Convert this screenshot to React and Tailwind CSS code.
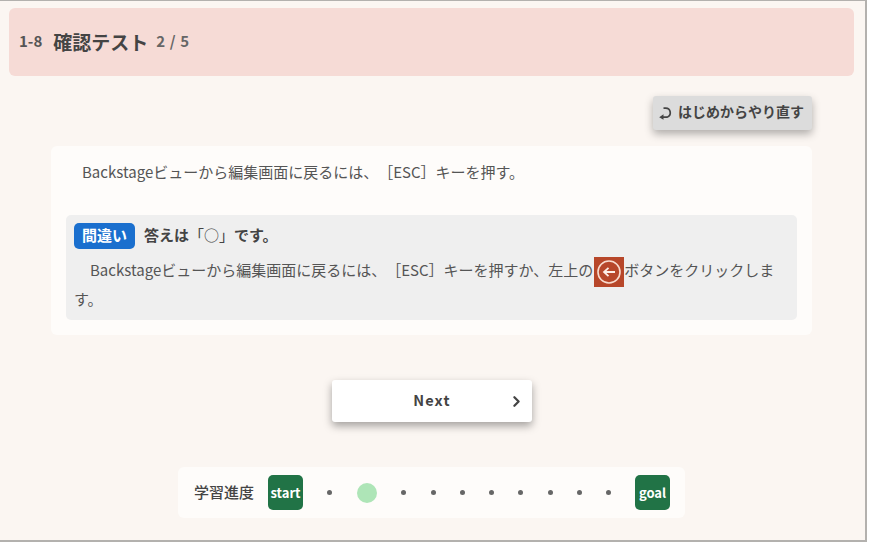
import { ChevronRight } from 'lucide-react';

const FONT = "font-['Noto_Sans_CJK_JP','Noto_Sans',sans-serif] [text-spacing-trim:space-all]";

function ProgressDot() {
  return <span className="w-[5px] h-[5px] rounded-full bg-[#666]" />;
}

function GreenBadge({ children }) {
  return (
    <span className="w-[35px] h-[35px] rounded-[5px] bg-[#217346] text-white text-[13px] font-bold flex items-center justify-center">
      {children}
    </span>
  );
}

function BackIcon() {
  return (
    <svg width="30" height="30" viewBox="0 0 30 30" className="inline-block align-top relative top-[2px] ml-[1px] -mb-[1px]">
      <rect width="30" height="30" fill="#b7472a" />
      <circle cx="15" cy="15" r="11" fill="none" stroke="#f8dccf" strokeWidth="1.6" />
      <path d="M21 15H10M14.5 10.8L10 15l4.5 4.2" fill="none" stroke="#fdeee6" strokeWidth="1.8" />
    </svg>
  );
}

function RetryIcon() {
  return (
    <svg width="14" height="14" viewBox="0 0 14 14" className="mt-[2px]">
      <path d="M5.5 2.2h2.2a4.6 4.6 0 0 1 1.3 9H3.5" fill="none" stroke="#444" strokeWidth="1.7" />
      <path d="M5.5 8.2L1.2 11.2l4.3 2.6z" fill="#444" />
    </svg>
  );
}

export default function App() {
  return (
    <div className={`w-[870px] h-[542px] bg-white overflow-hidden ${FONT}`}>
      <div className="w-[867px] h-[542px] bg-[#fbf6f2] border-t border-r-2 border-b-2 border-[#b3b1ae] pt-[7px] pl-[9px] pr-[11px] text-[#444]">
        <div className="h-[68px] rounded-[6px] bg-[#f6dbd6] flex items-center pl-[10px] pb-[1px]">
          <span className="text-[15px] font-bold text-[#555]">1-8</span>
          <span className="ml-[11px] text-[19px] font-bold leading-[28px]">確認テスト</span>
          <span className="ml-[8px] text-[15px] font-bold text-[#666] tracking-[0.04em]">2 / 5</span>
        </div>

        <div className="flex justify-end mt-[20px] pr-[42px]">
          <button className="w-[159px] h-[34px] pb-[3px] pr-[3px] rounded-[3px] bg-[#dcdcdc] shadow-[0_4px_8px_rgba(0,0,0,0.3)] flex items-center justify-center gap-[6px] text-[14px] font-bold text-[#444]">
            <RetryIcon />
            はじめからやり直す
          </button>
        </div>

        <div className="mt-[16px] ml-[42px] w-[761px] h-[189px] rounded-[6px] bg-[#fefcfa] px-[15px]">
          <p className="pt-[15px] pl-[16px] text-[15px] leading-[22px] text-[#555]">
            Backstageビューから編集画面に戻るには、［ESC］キーを押す。
          </p>
          <div className="mt-[32px] w-[731px] h-[105px] rounded-[5px] bg-[#efefef] px-[8px] pt-[8px]">
            <div className="flex items-center h-[26px]">
              <span className="w-[61px] h-[26px] pb-[2px] rounded-[5px] bg-[#1a6fce] text-white text-[15px] font-bold flex items-center justify-center">
                間違い
              </span>
              <span className="ml-[9px] pb-[2px] text-[15px] font-bold text-[#444]">
                答えは<span className="font-normal">「○」</span>です。
              </span>
            </div>
            <p className="mt-[6px] indent-[16px] text-[15px] leading-[29px] text-[#555]">
              Backstageビューから編集画面に戻るには、［ESC］キーを押すか、左上の
              <BackIcon />
              ボタンをクリックします。
            </p>
          </div>
        </div>

        <div className="flex mt-[45px] ml-[323px]">
          <button className="relative w-[200px] h-[42px] pb-[2px] rounded-[3px] bg-white shadow-[0_4px_8px_rgba(0,0,0,0.35)] text-[14.5px] font-bold tracking-[0.08em] text-[#444]">
            Next
            <ChevronRight size={17} strokeWidth={3.2} className="absolute right-[7px] top-[13px]" />
          </button>
        </div>

        <div className="mt-[45px] ml-[169px] w-[507px] h-[51px] rounded-[6px] bg-[#fefcfa] flex items-center pl-[16px]">
          <span className="w-[74px] text-[15px] font-medium text-[#444]">学習進度</span>
          <GreenBadge>start</GreenBadge>
          <div className="w-[332px] flex items-center justify-between pl-[24px] pr-[24px]">
            <ProgressDot />
            <span className="w-5 h-5 ml-[1px] rounded-full bg-[#aee5b7]" />
            <ProgressDot />
            <ProgressDot />
            <ProgressDot />
            <ProgressDot />
            <ProgressDot />
            <ProgressDot />
            <ProgressDot />
            <ProgressDot />
          </div>
          <GreenBadge>goal</GreenBadge>
        </div>
      </div>
    </div>
  );
}
